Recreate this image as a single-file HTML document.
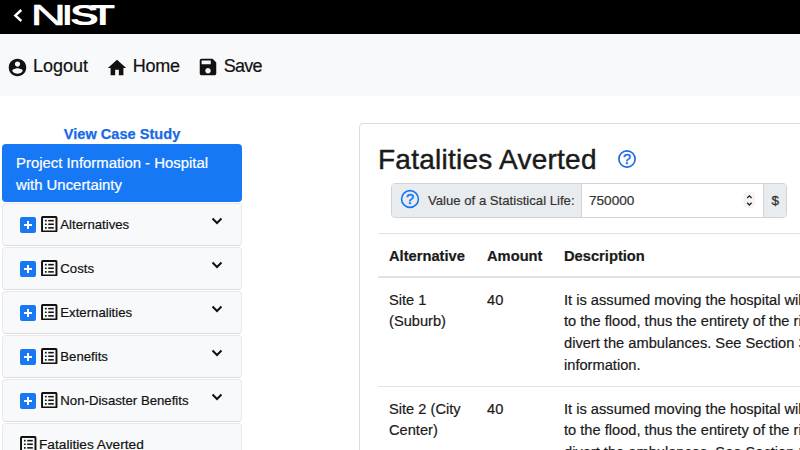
<!DOCTYPE html>
<html><head><meta charset="utf-8">
<style>
*{box-sizing:border-box;margin:0;padding:0}
html,body{width:800px;height:450px;overflow:hidden;background:#fff;font-family:"Liberation Sans",sans-serif;color:#212529}
.abs{position:absolute}
#top{left:0;top:0;width:800px;height:35px;background:#000;border-bottom:1px solid #333}
#nav{left:0;top:34px;width:800px;height:62px;background:#f8f9fa}
.navt{-webkit-text-stroke:0.200px #111;font-size:18px;line-height:22px;color:#111;top:55px;white-space:nowrap}
#vcs{left:0;width:244px;top:125px;text-align:center;font-weight:bold;font-size:14.500px;line-height:18px;color:#1769e4;-webkit-text-stroke:0.250px #1769e4;letter-spacing:0.050px}
#active{left:2px;top:144.400px;width:240px;height:57.200px;background:#1778f6;-webkit-text-stroke:0.200px #fff;border-radius:4px;color:#fff;font-size:14.900px;line-height:22px;padding:7.600px 14px}
.item{left:2px;width:240px;height:43px;background:#f8f9fa;border:1px solid #e9e9e9;border-bottom-color:#dedede;border-radius:4px;font-size:13.2px;line-height:16px}
.item .lbl{-webkit-text-stroke:0.200px #111;position:absolute;left:57.300px;top:13px;white-space:nowrap;color:#111}
.plus{position:absolute;left:17px;top:13px;width:16px;height:16px;background:#1877f2;border-radius:2px}
.plus:before{content:"";position:absolute;left:4px;top:7.200px;width:8px;height:1.600px;background:#fff}
.plus:after{content:"";position:absolute;left:7.200px;top:4px;width:1.600px;height:8px;background:#fff}
.list{position:absolute;left:38.350px;top:11.900px;width:16.500px;height:16.500px}
.chev{position:absolute;left:207.500px;top:13.200px;width:12px;height:8px}
#card{left:359px;top:122.500px;width:460px;height:340px;border:1px solid #dcdcdc;border-radius:4px;background:#fff}
#h1{left:378px;top:142.500px;font-size:28px;line-height:34px;color:#1a1a1a;white-space:nowrap;letter-spacing:0.250px;-webkit-text-stroke:0.450px #1a1a1a}
#ig{left:391px;top:183px;width:396px;height:35px;border:1px solid #ced4da;border-radius:4px;background:#fff;overflow:hidden}
#igl{left:0;top:0;width:190px;height:33px;background:#e9ecef;border-right:1px solid #ced4da}
#igr{left:371px;top:0;width:24px;height:33px;background:#e9ecef;border-left:1px solid #ced4da}
.t{-webkit-text-stroke:0.200px #1a1a1a;font-size:14.650px;line-height:21.700px;white-space:nowrap;color:#1a1a1a}
.b{font-weight:bold;font-size:14.700px}
.hl{height:1px;background:#e1e3e5;left:378px;width:430px}
</style></head><body>
<div class="abs" id="top"></div>
<svg class="abs" style="left:12px;top:8px" width="12" height="16" viewBox="0 0 12 16"><polyline points="9.300,2 3.300,7.500 9.300,13" fill="none" stroke="#fff" stroke-width="2.400"/></svg>
<svg class="abs" style="left:30px;top:0" width="95" height="34" viewBox="30 0 95 34" font-family="Liberation Sans, sans-serif" font-size="30.200" fill="#fff"><text transform="translate(30.500,24.800) scale(1.632,1)" x="0" y="0" stroke="#fff" stroke-width="0.500" stroke-linejoin="round">N</text><text font-weight="bold" transform="translate(62.500,24.800) scale(1.152,1)" x="0" y="0">I</text><text font-weight="bold" transform="translate(70,24.800) scale(1.440,1)" x="0" y="0">S</text><text font-weight="bold" transform="translate(90.800,24.800) scale(1.306,1)" x="0" y="0">T</text></svg>
<div class="abs" id="nav"></div>
<svg class="abs" style="left:7.400px;top:56.500px" width="21" height="21" viewBox="0 0 24 24"><path fill="#111" d="M12 2C6.48 2 2 6.48 2 12s4.48 10 10 10 10-4.48 10-10S17.520 2 12 2zm0 3c1.660 0 3 1.340 3 3s-1.340 3-3 3-3-1.340-3-3 1.340-3 3-3zm0 14.200c-2.500 0-4.710-1.280-6-3.220.030-1.990 4-3.080 6-3.080 1.990 0 5.970 1.090 6 3.080-1.290 1.940-3.500 3.220-6 3.220z"/></svg>
<div class="abs navt" style="left:33px">Logout</div>
<svg class="abs" style="left:106px;top:57px" width="22" height="22" viewBox="0 0 24 24"><path fill="#111" d="M10 20v-6h4v6h5v-8h3L12 3 2 12h3v8z"/></svg>
<div class="abs navt" style="left:132.700px;letter-spacing:-0.250px">Home</div>
<svg class="abs" style="left:197.400px;top:56.300px" width="22" height="22" viewBox="0 0 24 24"><path fill="#111" d="M17 3H5c-1.110 0-2 .9-2 2v14c0 1.100.89 2 2 2h14c1.100 0 2-.9 2-2V7l-4-4zm-5 16c-1.660 0-3-1.340-3-3s1.340-3 3-3 3 1.340 3 3-1.340 3-3 3zm3-10H5V5h10v4z"/></svg>
<div class="abs navt" style="left:223.800px;letter-spacing:-0.800px">Save</div>

<div class="abs" id="vcs">View Case Study</div>
<div class="abs" id="active">Project Information - Hospital<br>with Uncertainty</div>
<div class="abs item" style="top:203px"><span class="plus"></span><svg class="list" viewBox="0 0 16 16"><rect x="1" y="1" width="14" height="14" rx="0.600" fill="none" stroke="#111" stroke-width="1.900"/><rect x="3.800" y="3.700" width="1.700" height="1.600" rx="0.500" fill="#111"/><rect x="7" y="3.750" width="5.400" height="1.500" fill="#111"/><rect x="3.800" y="7.200" width="1.700" height="1.600" rx="0.500" fill="#111"/><rect x="7" y="7.250" width="5.400" height="1.500" fill="#111"/><rect x="3.800" y="10.700" width="1.700" height="1.600" rx="0.500" fill="#111"/><rect x="7" y="10.750" width="5.400" height="1.500" fill="#111"/></svg><span class="lbl">Alternatives</span><svg class="chev" viewBox="0 0 12 8"><polyline points="1.500,1.500 6,6 10.500,1.500" fill="none" stroke="#111" stroke-width="2"/></svg></div>
<div class="abs item" style="top:247px"><span class="plus"></span><svg class="list" viewBox="0 0 16 16"><rect x="1" y="1" width="14" height="14" rx="0.600" fill="none" stroke="#111" stroke-width="1.900"/><rect x="3.800" y="3.700" width="1.700" height="1.600" rx="0.500" fill="#111"/><rect x="7" y="3.750" width="5.400" height="1.500" fill="#111"/><rect x="3.800" y="7.200" width="1.700" height="1.600" rx="0.500" fill="#111"/><rect x="7" y="7.250" width="5.400" height="1.500" fill="#111"/><rect x="3.800" y="10.700" width="1.700" height="1.600" rx="0.500" fill="#111"/><rect x="7" y="10.750" width="5.400" height="1.500" fill="#111"/></svg><span class="lbl">Costs</span><svg class="chev" viewBox="0 0 12 8"><polyline points="1.500,1.500 6,6 10.500,1.500" fill="none" stroke="#111" stroke-width="2"/></svg></div>
<div class="abs item" style="top:291px"><span class="plus"></span><svg class="list" viewBox="0 0 16 16"><rect x="1" y="1" width="14" height="14" rx="0.600" fill="none" stroke="#111" stroke-width="1.900"/><rect x="3.800" y="3.700" width="1.700" height="1.600" rx="0.500" fill="#111"/><rect x="7" y="3.750" width="5.400" height="1.500" fill="#111"/><rect x="3.800" y="7.200" width="1.700" height="1.600" rx="0.500" fill="#111"/><rect x="7" y="7.250" width="5.400" height="1.500" fill="#111"/><rect x="3.800" y="10.700" width="1.700" height="1.600" rx="0.500" fill="#111"/><rect x="7" y="10.750" width="5.400" height="1.500" fill="#111"/></svg><span class="lbl">Externalities</span><svg class="chev" viewBox="0 0 12 8"><polyline points="1.500,1.500 6,6 10.500,1.500" fill="none" stroke="#111" stroke-width="2"/></svg></div>
<div class="abs item" style="top:335px"><span class="plus"></span><svg class="list" viewBox="0 0 16 16"><rect x="1" y="1" width="14" height="14" rx="0.600" fill="none" stroke="#111" stroke-width="1.900"/><rect x="3.800" y="3.700" width="1.700" height="1.600" rx="0.500" fill="#111"/><rect x="7" y="3.750" width="5.400" height="1.500" fill="#111"/><rect x="3.800" y="7.200" width="1.700" height="1.600" rx="0.500" fill="#111"/><rect x="7" y="7.250" width="5.400" height="1.500" fill="#111"/><rect x="3.800" y="10.700" width="1.700" height="1.600" rx="0.500" fill="#111"/><rect x="7" y="10.750" width="5.400" height="1.500" fill="#111"/></svg><span class="lbl">Benefits</span><svg class="chev" viewBox="0 0 12 8"><polyline points="1.500,1.500 6,6 10.500,1.500" fill="none" stroke="#111" stroke-width="2"/></svg></div>
<div class="abs item" style="top:379px"><span class="plus"></span><svg class="list" viewBox="0 0 16 16"><rect x="1" y="1" width="14" height="14" rx="0.600" fill="none" stroke="#111" stroke-width="1.900"/><rect x="3.800" y="3.700" width="1.700" height="1.600" rx="0.500" fill="#111"/><rect x="7" y="3.750" width="5.400" height="1.500" fill="#111"/><rect x="3.800" y="7.200" width="1.700" height="1.600" rx="0.500" fill="#111"/><rect x="7" y="7.250" width="5.400" height="1.500" fill="#111"/><rect x="3.800" y="10.700" width="1.700" height="1.600" rx="0.500" fill="#111"/><rect x="7" y="10.750" width="5.400" height="1.500" fill="#111"/></svg><span class="lbl">Non-Disaster Benefits</span><svg class="chev" viewBox="0 0 12 8"><polyline points="1.500,1.500 6,6 10.500,1.500" fill="none" stroke="#111" stroke-width="2"/></svg></div>
<div class="abs item" style="top:423px"><svg class="list" style="left:17px" viewBox="0 0 16 16"><rect x="1" y="1" width="14" height="14" rx="0.600" fill="none" stroke="#111" stroke-width="1.900"/><rect x="3.800" y="3.700" width="1.700" height="1.600" rx="0.500" fill="#111"/><rect x="7" y="3.750" width="5.400" height="1.500" fill="#111"/><rect x="3.800" y="7.200" width="1.700" height="1.600" rx="0.500" fill="#111"/><rect x="7" y="7.250" width="5.400" height="1.500" fill="#111"/><rect x="3.800" y="10.700" width="1.700" height="1.600" rx="0.500" fill="#111"/><rect x="7" y="10.750" width="5.400" height="1.500" fill="#111"/></svg><span class="lbl" style="left:36px;font-size:13.700px">Fatalities Averted</span></div>
<div class="abs" id="card"></div>
<div class="abs" id="h1">Fatalities Averted</div>
<svg class="abs" style="left:617.400px;top:148.800px" width="20" height="20" viewBox="0 0 20 20"><circle cx="10" cy="10" r="8.100" fill="none" stroke="#1d6ae4" stroke-width="1.700"/><text x="10" y="15.200" text-anchor="middle" font-family="Liberation Sans, sans-serif" font-size="14.500" fill="#1d6ae4" stroke="#1d6ae4" stroke-width="0.400">?</text></svg>
<div class="abs" id="ig"><div class="abs" id="igl"></div><div class="abs" id="igr"></div></div>
<svg class="abs" style="left:400px;top:189px" width="20" height="20" viewBox="0 0 20 20"><circle cx="10" cy="10" r="8.400" fill="none" stroke="#1877f2" stroke-width="1.600"/><text x="10" y="15.200" text-anchor="middle" font-family="Liberation Sans, sans-serif" font-size="14.500" fill="#1877f2" stroke="#1877f2" stroke-width="0.500">?</text></svg>
<div class="abs" style="left:428px;top:192px;font-size:13.150px;line-height:18px;color:#333;-webkit-text-stroke:0.200px #333;white-space:nowrap">Value of a Statistical Life:</div>
<div class="abs" style="left:589px;top:192px;font-size:13.600px;line-height:18px;color:#333;-webkit-text-stroke:0.200px #333;white-space:nowrap">750000</div>
<svg class="abs" style="left:743px;top:191px" width="13" height="18" viewBox="0 0 13 18"><rect x="1" y="1.200" width="10.800" height="15.300" rx="4" fill="#f4f4f4" stroke="#ececec" stroke-width="0.600"/><polyline points="4.200,7 6.400,4.800 8.600,7" fill="none" stroke="#222" stroke-width="1.300"/><polyline points="4.200,11.800 6.400,14 8.600,11.800" fill="none" stroke="#222" stroke-width="1.300"/></svg>
<div class="abs" style="left:771.500px;top:192px;font-size:13.500px;line-height:18px;color:#333;-webkit-text-stroke:0.300px #333">$</div>
<div class="abs hl" style="top:233px"></div>
<div class="abs t b" style="left:389px;top:245.500px">Alternative</div>
<div class="abs t b" style="left:487px;top:245.500px">Amount</div>
<div class="abs t b" style="left:564px;top:245.500px">Description</div>
<div class="abs hl" style="top:276px;height:2px"></div>
<div class="abs t" style="left:389px;top:289.500px">Site 1<br>(Suburb)</div>
<div class="abs t" style="left:487px;top:289.500px">40</div>
<div class="abs t" style="left:564px;top:289.500px">It is assumed moving the hospital will eliminate all fatalities due<br>to the flood, thus the entirety of the risk is removed. No need to<br>divert the ambulances. See Section 3.2 of the guide for more<br>information.</div>
<div class="abs hl" style="top:386px"></div>
<div class="abs t" style="left:389px;top:398.600px">Site 2 (City<br>Center)</div>
<div class="abs t" style="left:487px;top:398.600px">40</div>
<div class="abs t" style="left:564px;top:398.600px">It is assumed moving the hospital will eliminate all fatalities due<br>to the flood, thus the entirety of the risk is removed. No need to<br>divert the ambulances. See Section 3.2 of the guide for more<br>information.</div>
</body></html>
